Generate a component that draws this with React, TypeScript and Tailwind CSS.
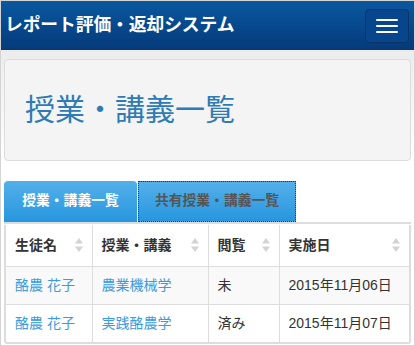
import { useState } from 'react'

const rows = [
  { student: '酪農 花子', course: '農業機械学', status: '未', date: '2015年11月06日' },
  { student: '酪農 花子', course: '実践酪農学', status: '済み', date: '2015年11月07日' },
]

function SortIcon() {
  return (
    <svg width="8" height="14" viewBox="0 0 8 14" className="shrink-0">
      <path d="M4 0 L8 5.5 L0 5.5 Z" fill="#d3d3d3" />
      <path d="M4 14 L8 8.5 L0 8.5 Z" fill="#d3d3d3" />
    </svg>
  )
}

function Th({ label, className }: { label: string; className?: string }) {
  return (
    <th className={`border-r border-[#dddddd] px-[9px] text-left font-bold ${className ?? ''}`}>
      <div className="flex items-center justify-between">
        <span>{label}</span>
        <SortIcon />
      </div>
    </th>
  )
}

export default function App() {
  const [tab, setTab] = useState(0)

  return (
    <div className="h-[346px] w-[415px] overflow-hidden border border-[#d4d4d4] bg-white font-['Liberation_Sans','Noto_Sans_CJK_JP',sans-serif] text-[14px] text-[#333333]">
      <nav className="flex h-[49px] items-center justify-between bg-gradient-to-b from-[#0a58a0] to-[#053a7a] pl-[4px] pr-[5px]">
        <span className="text-[17.8px] font-bold tracking-[-0.1px] text-white">レポート評価・返却システム</span>
        <button className="flex h-[34px] w-[44px] flex-col items-center justify-center gap-[4px] rounded-[4px] border border-[#0a3466] bg-[#07468c]">
          <span className="block h-[2px] w-[22px] rounded-[1px] bg-white" />
          <span className="block h-[2px] w-[22px] rounded-[1px] bg-white" />
          <span className="block h-[2px] w-[22px] rounded-[1px] bg-white" />
        </button>
      </nav>

      <div className="bg-gradient-to-b from-[#ececec] to-white px-[3px] pt-[9px]">
        <div className="flex h-[102px] items-center rounded-[4px] border border-[#dcdcdc] bg-[#f4f4f4] px-[20px]">
          <h1 className="text-[30px] leading-none text-[#2e7bb6]">授業・講義一覧</h1>
        </div>
      </div>

      <div className="px-[3px] pt-[20px]">
        <div className="flex h-[43px] items-stretch border-b-[2px] border-[#dddddd]">
          <button
            onClick={() => setTab(0)}
            className="w-[133px] rounded-t-[4px] bg-gradient-to-b from-[#52b0ea] to-[#2596de] text-[13.8px] font-bold text-white"
          >
            授業・講義一覧
          </button>
          <button
            onClick={() => setTab(1)}
            className={`ml-px w-[158px] border border-dotted border-[#333333] bg-gradient-to-b from-[#52b0ea] to-[#2596de] text-[13.8px] font-bold text-[#555555] ${tab === 1 ? '' : ''}`}
          >
            共有授業・講義一覧
          </button>
        </div>

        <div className="mt-px overflow-hidden rounded-b-[3px] border-[2px] border-t-0 border-[#dddddd]">
          <table className="w-full border-collapse">
            <thead>
              <tr className="h-[41px] border-b border-[#dddddd]">
                <Th label="生徒名" className="w-[86px]" />
                <Th label="授業・講義" className="w-[116px]" />
                <Th label="閲覧" className="w-[71px]" />
                <Th label="実施日" className="border-r-0" />
              </tr>
            </thead>
            <tbody>
              {rows.map((r, i) => (
                <tr key={i} className={`h-[38px] border-b border-[#dddddd] last:border-b-0 ${i === 0 ? 'bg-[#f9f9f9]' : 'bg-white'}`}>
                  <td className="border-r border-[#dddddd] px-[9px] text-[#3a9be2]">{r.student}</td>
                  <td className="border-r border-[#dddddd] px-[9px] text-[#3a9be2]">{r.course}</td>
                  <td className="border-r border-[#dddddd] px-[9px]">{r.status}</td>
                  <td className="px-[9px]">{r.date}</td>
                </tr>
              ))}
            </tbody>
          </table>
        </div>
      </div>
    </div>
  )
}
